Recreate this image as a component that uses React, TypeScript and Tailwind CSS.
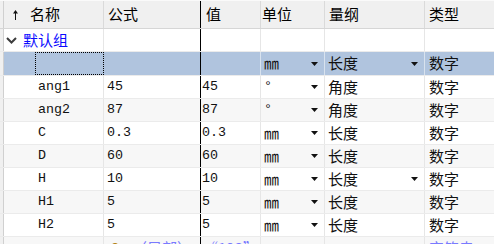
import React from "react";

const cjk = "font-['Noto_Sans_CJK_SC',sans-serif] text-[15px]";
const mono = "font-['Liberation_Mono','Noto_Sans_CJK_SC',monospace] text-[13.33px]";

const DropArrow = () => (
  <svg width="7" height="4" viewBox="0 0 7 4" className="shrink-0">
    <path d="M0 0H7L3.5 4Z" fill="#111" />
  </svg>
);

type Row = {
  name: string;
  formula: string;
  value: string;
  unit: string;
  dim: string;
  dimArrow?: boolean;
};

const rows: Row[] = [
  { name: "ang1", formula: "45", value: "45", unit: "°", dim: "角度" },
  { name: "ang2", formula: "87", value: "87", unit: "°", dim: "角度" },
  { name: "C", formula: "0.3", value: "0.3", unit: "㎜", dim: "长度" },
  { name: "D", formula: "60", value: "60", unit: "㎜", dim: "长度" },
  { name: "H", formula: "10", value: "10", unit: "㎜", dim: "长度", dimArrow: true },
  { name: "H1", formula: "5", value: "5", unit: "㎜", dim: "长度" },
  { name: "H2", formula: "5", value: "5", unit: "㎜", dim: "长度" },
];

const UnitText = ({ unit }: { unit: string }) =>
  unit === "°" ? (
    <span className={`${mono} self-start mt-[1px]`}>{unit}</span>
  ) : (
    <span className={`${cjk} text-[14px]`}>{unit}</span>
  );

const App = () => {
  return (
    <div className="w-[494px] h-[244px] overflow-hidden bg-white text-[#111]">
      {/* header */}
      <div className="flex h-[29px] bg-[#f0f0f0] border-b border-[#d6d6d6] border-t border-t-[#fafafa] text-black">
        <div className="w-[4px] border-r border-[#d0d0d0]" />
        <div className="w-[100px] flex items-center border-r border-[#dadada]">
          <svg width="5" height="10" viewBox="0 0 5 10" className="ml-[9px] mr-[12px]">
            <path d="M2.5 0L0 3.5H5Z" fill="#111" />
            <path d="M2.5 2V10" stroke="#111" strokeWidth="1" />
          </svg>
          <span className={cjk}>名称</span>
        </div>
        <div className={`w-[97px] flex items-center pl-[4px] border-r border-black ${cjk}`}>公式</div>
        <div className={`w-[60px] flex items-center pl-[5px] border-r border-[#dadada] ${cjk}`}>值</div>
        <div className={`w-[64px] flex items-center pl-[1px] border-r border-[#dadada] ${cjk}`}>单位</div>
        <div className={`w-[100px] flex items-center pl-[4px] border-r border-[#dadada] ${cjk}`}>量纲</div>
        <div className={`flex-1 flex items-center pl-[4px] ${cjk}`}>类型</div>
      </div>

      {/* group row */}
      <div className="flex h-[23px] border-b border-[#ebebeb]">
        <div className="w-[4px] bg-[#f0f0f0] border-r border-[#d0d0d0]" />
        <div className="w-[100px] flex items-center border-r border-[#e6e6e6]">
          <svg width="11" height="7" viewBox="0 0 11 7" className="ml-[2px] mr-[6px]">
            <polyline points="1,1 5.5,5.5 10,1" fill="none" stroke="#3c3c3c" strokeWidth="2" />
          </svg>
          <span className={`${cjk} text-[#0a0aff]`}>默认组</span>
        </div>
        <div className="w-[97px] border-r border-black" />
        <div className="w-[60px] border-r border-[#e6e6e6]" />
        <div className="w-[64px] border-r border-[#e6e6e6]" />
        <div className="w-[100px] border-r border-[#e6e6e6]" />
        <div className="flex-1" />
      </div>

      {/* selected row */}
      <div className="flex h-[23px] bg-[#b0c4de]">
        <div className="w-[4px] bg-[#f0f0f0] border-r border-[#d0d0d0]" />
        <div className="w-[100px] flex">
          <div className="ml-[31px] flex-1 border border-dotted border-black" />
        </div>
        <div className="w-[97px] border-r border-black" />
        <div className="w-[60px] border-r border-[#d8e2ee]" />
        <div className="w-[64px] flex items-center justify-between pl-[3px] pr-[6px] border-r border-[#d8e2ee]">
          <UnitText unit="㎜" />
          <DropArrow />
        </div>
        <div className="w-[100px] flex items-center justify-between pl-[3px] pr-[6px] border-r border-[#d8e2ee]">
          <span className={cjk}>长度</span>
          <DropArrow />
        </div>
        <div className={`flex-1 flex items-center pl-[4px] ${cjk}`}>数字</div>
      </div>

      {rows.map((r, i) => (
        <div
          key={r.name}
          className={`flex h-[23px] border-t border-[#ebebeb] ${i % 2 === 1 ? "bg-[#f7f7f7]" : "bg-white"}`}
        >
          <div className="w-[4px] bg-[#f0f0f0] border-r border-[#d0d0d0]" />
          <div className={`w-[100px] flex items-center pl-[34px] border-r border-[#e6e6e6] ${mono}`}>{r.name}</div>
          <div className={`w-[97px] flex items-center pl-[3px] border-r border-black ${mono}`}>{r.formula}</div>
          <div className={`w-[60px] flex items-center pl-[1px] border-r border-[#e6e6e6] ${mono}`}>{r.value}</div>
          <div className="w-[64px] flex items-center justify-between pl-[3px] pr-[6px] border-r border-[#e6e6e6]">
            <UnitText unit={r.unit} />
            <DropArrow />
          </div>
          <div className="w-[100px] flex items-center justify-between pl-[3px] pr-[6px] border-r border-[#e6e6e6]">
            <span className={cjk}>{r.dim}</span>
            {r.dimArrow && <DropArrow />}
          </div>
          <div className={`flex-1 flex items-center pl-[4px] ${cjk}`}>数字</div>
        </div>
      ))}

      {/* partially visible last row */}
      <div className="flex h-[23px] border-t border-[#ebebeb] bg-[#f7f7f7] text-[#7a7aff]">
        <div className="w-[4px] bg-[#f0f0f0] border-r border-[#d0d0d0]" />
        <div className={`w-[100px] flex items-center pl-[44px] border-r border-[#e6e6e6] ${mono}`}>s</div>
        <div className="w-[97px] flex items-center pl-[6px] gap-[12px] border-r border-black">
          <span className="w-[10px] h-[10px] rounded-full bg-[#e8b030] border border-[#b07c10]" />
          <span className={cjk}>〈局部〉</span>
        </div>
        <div className={`w-[60px] flex items-center pl-[2px] border-r border-[#e6e6e6] ${cjk}`}>“123”</div>
        <div className="w-[64px] border-r border-[#e6e6e6]" />
        <div className="w-[100px] border-r border-[#e6e6e6]" />
        <div className={`flex-1 flex items-center pl-[4px] ${cjk}`}>字符串</div>
      </div>
    </div>
  );
};

export default App;
